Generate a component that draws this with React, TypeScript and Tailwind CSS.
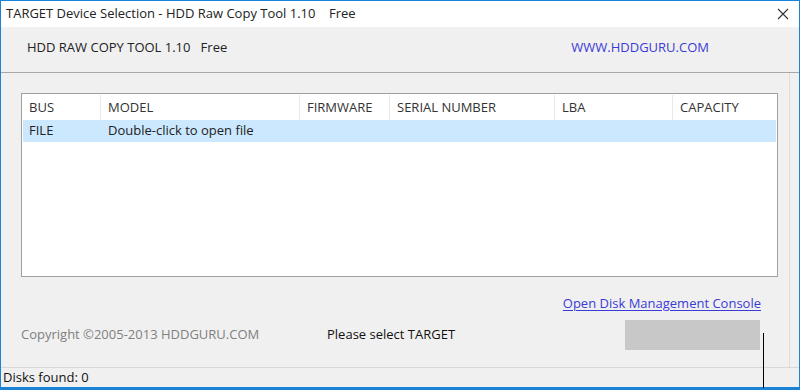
import React from "react";

const columns = [
  { label: "BUS", width: 79 },
  { label: "MODEL", width: 199 },
  { label: "FIRMWARE", width: 90 },
  { label: "SERIAL NUMBER", width: 165 },
  { label: "LBA", width: 118 },
  { label: "CAPACITY", width: 104 },
];

const font = { fontFamily: '"Open Sans", "Noto Sans", sans-serif' };

export default function App() {
  return (
    <div
      className="relative w-[800px] h-[390px] flex flex-col bg-[#f0f0f0] border-t border-x border-[#1883d7] overflow-hidden text-[#1a1a1a]"
      style={font}
    >
      {/* title bar */}
      <div className="h-[26px] bg-white flex items-center justify-between pl-[5px] pr-[9px] shrink-0">
        <span className="text-[13px] text-[#222]">
          TARGET Device Selection - HDD Raw Copy Tool 1.10&nbsp;&nbsp;&nbsp; Free
        </span>
        <svg width="12" height="12" viewBox="0 0 12 12" className="mr-[1px]">
          <path d="M1 1 L11 11 M11 1 L1 11" stroke="#333" strokeWidth="1.1" />
        </svg>
      </div>

      {/* header */}
      <div className="h-[46px] shrink-0 flex items-center border-b border-[#a8a8a8] pl-[26px] pr-[90px] pb-[3px] justify-between">
        <span className="text-[13px] text-[#222]">HDD RAW COPY TOOL 1.10&nbsp;&nbsp; Free</span>
        <span className="text-[13px] text-[#3b3bd6]">WWW.HDDGURU.COM</span>
      </div>

      {/* body */}
      <div className="flex-1 flex flex-col border-r border-[#dcdcdc] mr-[9px]">
        <div className="ml-[20px] mr-[11px] mt-[20px] h-[184px] bg-white border border-[#a0a0a0] flex flex-col">
          <div className="flex h-[26px] pt-[1px]">
            {columns.map((c, i) => (
              <div
                key={c.label}
                className={`flex items-center pl-[7px] text-[13px] text-[#333] ${i < columns.length - 1 ? "border-r border-[#e8e8e8]" : ""}`}
                style={{ width: c.width }}
              >
                {c.label}
              </div>
            ))}
          </div>
          <div className="flex h-[22px] bg-[#cce8ff] mx-[1px]">
            <div className="w-[78px] flex items-center pl-[6px] text-[13px] text-[#222]">FILE</div>
            <div className="flex items-center pl-[7px] text-[13px] text-[#222]">Double-click to open file</div>
          </div>
        </div>

        <div className="flex justify-end mt-[17px] mr-[28px]">
          <span className="text-[13px] text-[#3b3bd6] underline underline-offset-2">Open Disk Management Console</span>
        </div>

        <div className="flex items-center mt-[6px] pl-[20px] h-[30px]">
          <span className="text-[13px] text-[#808080] w-[306px]">Copyright ©2005-2013 HDDGURU.COM</span>
          <span className="text-[13px] text-[#111]">Please select TARGET</span>
          <div className="ml-auto mr-[29px] w-[135px] h-[30px] bg-[#c8c8c8]" />
        </div>
        <div className="flex-1" />
      </div>

      {/* status bar */}
      <div className="h-[20px] shrink-0 flex items-center border-t border-[#d8d8d8] pl-[2px]">
        <span className="text-[13px] text-[#111]">Disks found: 0</span>
      </div>
      <div className="h-[3px] shrink-0 bg-[#1883d7]" />

      {/* stray black edge line seen in the capture */}
      <div className="absolute left-[762px] top-[332px] w-[1px] h-[55px] bg-black" />
    </div>
  );
}
